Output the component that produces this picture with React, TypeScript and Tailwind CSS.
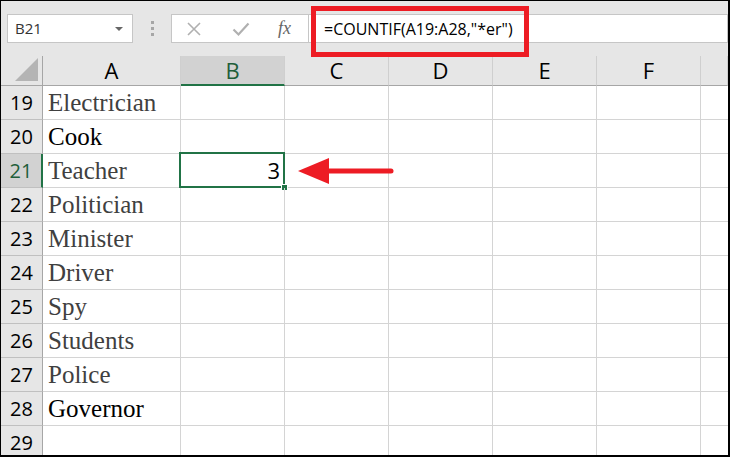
const rows: { n: number; text: string; dark?: boolean }[] = [
  { n: 19, text: "Electrician" },
  { n: 20, text: "Cook", dark: true },
  { n: 21, text: "Teacher" },
  { n: 22, text: "Politician" },
  { n: 23, text: "Minister" },
  { n: 24, text: "Driver" },
  { n: 25, text: "Spy" },
  { n: 26, text: "Students" },
  { n: 27, text: "Police" },
  { n: 28, text: "Governor", dark: true },
  { n: 29, text: "" },
];

const cols = ["B", "C", "D", "E", "F", ""];

function Toolbar() {
  return (
    <div className="flex h-[55px] items-start pl-[6px] pt-[13px]">
      <div className="flex h-[29px] w-[126px] items-center justify-between border border-[#c6c6c6] bg-white pl-[7px] pr-[9px] text-[15px] text-[#333]">
        <span>B21</span>
        <span className="h-0 w-0 border-x-[4px] border-t-[4px] border-x-transparent border-t-[#666]" />
      </div>
      <div className="flex h-[29px] w-[38px] flex-col items-center justify-center gap-[3px]">
        <span className="h-[3px] w-[3px] bg-[#a6a6a6]" />
        <span className="h-[3px] w-[3px] bg-[#a6a6a6]" />
        <span className="h-[3px] w-[3px] bg-[#a6a6a6]" />
      </div>
      <div className="flex h-[29px] w-[138px] items-center border border-[#c6c6c6] bg-white pl-[14px]">
        <svg width="16" height="16" viewBox="0 0 16 16" className="mr-[30px]">
          <path d="M2 2 L14 14 M14 2 L2 14" stroke="#b0b0b0" strokeWidth="1.6" fill="none" />
        </svg>
        <svg width="18" height="16" viewBox="0 0 18 16" className="mr-[28px]">
          <path d="M1.5 8.5 L6.5 13.5 L16.5 2.5" stroke="#b0b0b0" strokeWidth="2.2" fill="none" />
        </svg>
        <span className="font-[Liberation_Serif] text-[18px] italic text-[#666]">fx</span>
      </div>
      <div className="flex h-[29px] flex-1 items-center border border-l-0 border-[#c6c6c6] bg-white pl-[15px] text-[16px] text-black">
        =COUNTIF(A19:A28,"*er")
      </div>
    </div>
  );
}

export default function App() {
  return (
    <div className="relative h-[457px] w-[730px] overflow-hidden border-b-2 border-l border-r-2 border-t border-black bg-[#e6e6e6] font-['Open_Sans',sans-serif]">
      <Toolbar />
      <div className="grid grid-cols-[42px_138px_104px_104px_104px_104px_104px_1fr] bg-white">
        {/* header row */}
        <div className="relative h-[30px] border-b border-r border-[#a6a6a6] bg-[#e6e6e6]">
          <svg width="24" height="24" viewBox="0 0 24 24" className="absolute bottom-[3px] right-[3px]">
            <path d="M23 0 L23 23 L0 23 Z" fill="#b4b4b4" />
          </svg>
        </div>
        <div className="flex h-[30px] items-center justify-center border-b border-r border-b-[#a6a6a6] border-r-[#cfcfcf] bg-[#e6e6e6] text-[22px] text-black">
          A
        </div>
        {cols.map((c) =>
          c === "B" ? (
            <div
              key={c}
              className="flex h-[30px] items-center justify-center border-b-2 border-r border-b-[#217346] border-r-[#cfcfcf] bg-[#d2d2d2] text-[22px] text-[#1f5e3a]"
            >
              {c}
            </div>
          ) : (
            <div
              key={c || "g"}
              className="flex h-[30px] items-center justify-center border-b border-r border-b-[#a6a6a6] border-r-[#cfcfcf] bg-[#e6e6e6] text-[22px] text-black"
            >
              {c}
            </div>
          )
        )}

        {rows.map((r) => {
          const sel = r.n === 21;
          return (
            <div key={r.n} className="contents">
              <div
                className={
                  sel
                    ? "flex h-[34px] items-center justify-center border-b border-r-2 border-b-[#c0c0c0] border-r-[#217346] bg-[#d2d2d2] text-[20px] text-[#1f5e3a]"
                    : "flex h-[34px] items-center justify-center border-b border-r border-b-[#c0c0c0] border-r-[#a6a6a6] bg-[#e6e6e6] text-[20px] text-black"
                }
              >
                {r.n}
              </div>
              <div
                className={
                  r.dark
                    ? "flex h-[34px] items-center border-b border-r border-[#d4d4d4] pl-[5px] font-[Liberation_Serif] text-[25px] text-black"
                    : "flex h-[34px] items-center border-b border-r border-[#d4d4d4] pl-[5px] font-[Liberation_Serif] text-[25px] text-[#404040]"
                }
              >
                {r.text}
              </div>
              <div className="relative flex h-[34px] items-center justify-end border-b border-r border-[#d4d4d4] pr-[4px] text-[22px] text-black">
                {sel && (
                  <>
                    3
                    <span className="absolute -bottom-[1px] -left-[2px] -right-[1px] -top-[2px] border-2 border-[#217346]" />
                    <span className="absolute -bottom-[4px] -right-[4px] h-[7px] w-[7px] border border-white bg-[#217346]" />
                  </>
                )}
              </div>
              <div className="h-[34px] border-b border-r border-[#d4d4d4]" />
              <div className="h-[34px] border-b border-r border-[#d4d4d4]" />
              <div className="h-[34px] border-b border-r border-[#d4d4d4]" />
              <div className="h-[34px] border-b border-r border-[#d4d4d4]" />
              <div className="h-[34px] border-b border-[#d4d4d4]" />
            </div>
          );
        })}
      </div>

      {/* annotation: red box around formula */}
      <div className="absolute left-[310px] top-[5px] h-[51px] w-[218px] border-[5px] border-[#ed1c24]" />

      {/* annotation: arrow */}
      <svg width="100" height="30" viewBox="0 0 100 30" className="absolute left-[295px] top-[155px]">
        <path d="M2 15 L33 2 L33 28 Z" fill="#ed1c24" />
        <path d="M30 15 L95 15" stroke="#ed1c24" strokeWidth="5" strokeLinecap="round" />
      </svg>
    </div>
  );
}
